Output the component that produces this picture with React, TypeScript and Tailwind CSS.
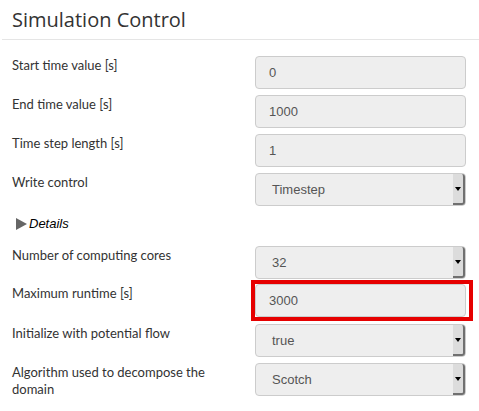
const labelCls = "w-[255px] shrink-0 pl-3 pr-[20px] pt-[1px] text-[13px] leading-[17px] text-[#333] [font-family:Lato,sans-serif]";
const boxCls =
  "relative flex h-[33px] w-[211px] items-center rounded-[4px] border border-[#cccccc] bg-[#eeeeee] text-[13px] text-[#555] [font-family:'Liberation_Sans',Arial,sans-serif]";

const TextBox = ({ value }: { value: string }) => (
  <div className={boxCls}>
    <span className="pl-[13px]">{value}</span>
  </div>
);

const SelectBox = ({ value }: { value: string }) => (
  <div className={boxCls}>
    <span className="pl-[16px]">{value}</span>
    <div className="absolute right-0 top-0 flex h-full w-[12px] items-center justify-center rounded-r-[3px] border-b-2 border-r-2 border-[#707070] bg-[#dcdcdc]">
      <span className="block h-0 w-0 border-x-[3px] border-t-[4px] border-x-transparent border-t-black" />
    </div>
  </div>
);

const Row = ({ label, children, className = "" }: { label: string; children: React.ReactNode; className?: string }) => (
  <div className={`flex items-start ${className}`}>
    <div className={labelCls}>{label}</div>
    {children}
  </div>
);

export default function App() {
  return (
    <div className="h-[411px] w-[479px] overflow-hidden bg-white">
      <div className="flex h-[40px] items-center border-b border-[#e5e5e5] pl-3 ml-[2px]">
        <h1 className="-ml-[2px] text-[20px] text-[#333] [font-family:'Open_Sans',sans-serif]">Simulation Control</h1>
      </div>

      <div className="pt-[16px]">
        <Row label="Start time value [s]">
          <TextBox value="0" />
        </Row>
        <Row label="End time value [s]" className="mt-[6px]">
          <TextBox value="1000" />
        </Row>
        <Row label="Time step length [s]" className="mt-[6px]">
          <TextBox value="1" />
        </Row>
        <Row label="Write control" className="mt-[6px]">
          <SelectBox value="Timestep" />
        </Row>

        <div className="flex h-[40px] items-center pb-[4px] pl-[16px]">
          <span className="mr-[2px] block h-0 w-0 border-y-[6px] border-l-[11px] border-y-transparent border-l-[#666]" />
          <span className="text-[13px] italic text-black [font-family:'Liberation_Sans',Arial,sans-serif]">Details</span>
        </div>

        <Row label="Number of computing cores">
          <SelectBox value="32" />
        </Row>
        <Row label="Maximum runtime [s]" className="mt-[5px]">
          <div className="-my-[4px] -ml-[4px] w-[222px] border-4 border-[#e60000]">
            <TextBox value="3000" />
          </div>
        </Row>
        <Row label="Initialize with potential flow" className="mt-[7px]">
          <SelectBox value="true" />
        </Row>
        <Row label="Algorithm used to decompose the domain" className="mt-[6px]">
          <SelectBox value="Scotch" />
        </Row>
      </div>
    </div>
  );
}
